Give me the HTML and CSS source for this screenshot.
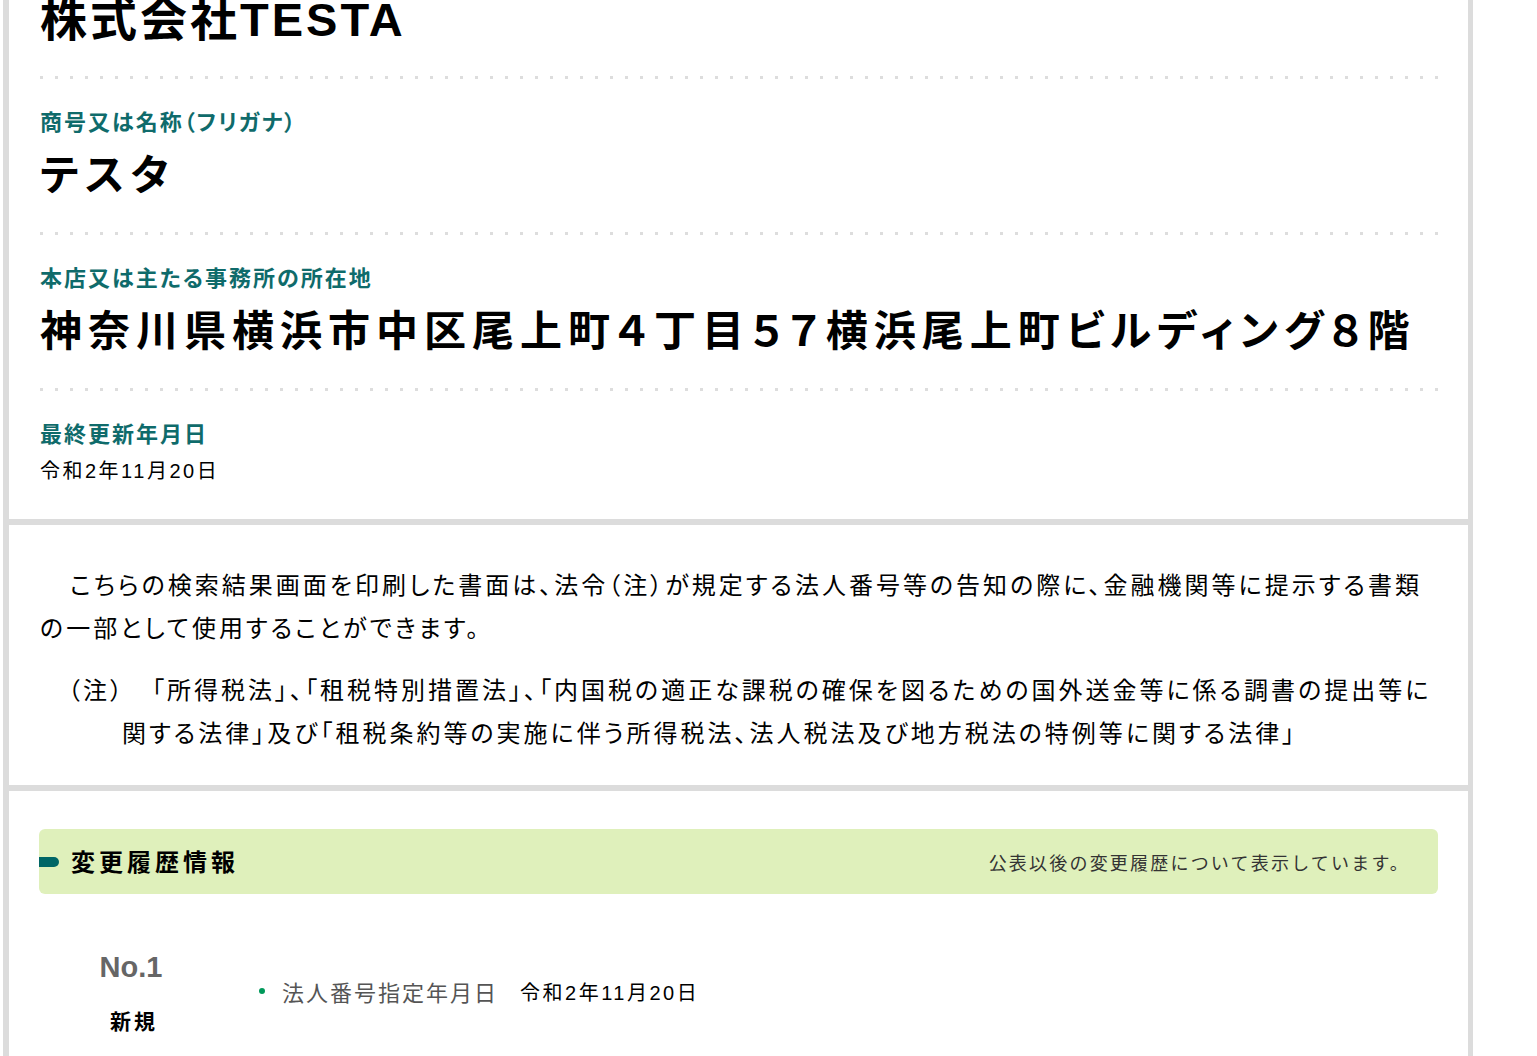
FILE: index.html
```html
<!doctype html>
<html lang="ja">
  <head>
    <meta charset="utf-8">
    <title>法人番号公表サイト</title>
    <link rel="stylesheet" href="styles.css">
  </head>
  <body>
    <div class="page">
      <section class="panel">
        <h1 class="corp-name">株式会社TESTA</h1>
        <div class="field">
          <div class="label">商号又は名称（フリガナ）</div>
          <div class="value">テスタ</div>
        </div>
        <div class="field">
          <div class="label">本店又は主たる事務所の所在地</div>
          <div class="value">神奈川県横浜市中区尾上町４丁目５７横浜尾上町ビルディング８階</div>
        </div>
        <div class="field last">
          <div class="label">最終更新年月日</div>
          <div class="date">令和2年11月20日</div>
        </div>
      </section>

      <section class="panel notice">
        <p class="lead">こちらの検索結果画面を印刷した書面は、法令（注）が規定する法人番号等の告知の際に、金融機関等に提示する書類の一部として使用することができます。</p>
        <p class="note">（注）　「所得税法」、「租税特別措置法」、「内国税の適正な課税の確保を図るための国外送金等に係る調書の提出等に関する法律」及び「租税条約等の実施に伴う所得税法、法人税法及び地方税法の特例等に関する法律」</p>
      </section>

      <section class="panel history">
        <div class="history-head">
          <span class="marker"></span>
          <h2>変更履歴情報</h2>
          <span class="head-note">公表以後の変更履歴について表示しています。</span>
        </div>
        <div class="entry">
          <div class="entry-no">
            <div class="no">No.1</div>
            <div class="kind">新規</div>
          </div>
          <ul class="entry-items">
            <li><span class="item-label">法人番号指定年月日</span><span class="item-date">令和2年11月20日</span></li>
          </ul>
        </div>
      </section>
    </div>
  </body>
</html>
```

FILE: styles.css
```css
body {
  margin: 0;
  background: #fff;
  color: #000;
  font-family: "Liberation Sans", "Noto Sans CJK JP", sans-serif;
}
.page {
  width: 1459px;
  margin: -50px 0 0 3px;
  padding: 0 5px 0 6px;
  background: #dcdcdc;
  display: flex;
  flex-direction: column;
  gap: 6px;
}
.panel {
  background: #fff;
  padding: 44px 30px 33px 31px;
}
.corp-name {
  margin: 0;
  font-size: 47px;
  line-height: 52px;
  letter-spacing: 3px;
  padding-bottom: 30px;
}
.field {
  padding: 32px 0 28px;
  background: linear-gradient(to right, #ddd 3px, transparent 3px) 0 0 / 15px 3px repeat-x;
}
.field.last {
  padding-bottom: 0;
}
.label {
  color: #0f6b6b;
  font-size: 22px;
  line-height: 30px;
  font-weight: bold;
  letter-spacing: 2px;
  font-feature-settings: "palt";
}
.value {
  margin-top: 10px;
  font-size: 42px;
  line-height: 56px;
  font-weight: bold;
  letter-spacing: 6px;
  font-feature-settings: "palt";
}
.date {
  margin-top: 6px;
  font-size: 20px;
  line-height: 30px;
  letter-spacing: 2.5px;
}
.notice {
  padding: 39px 30px 30px 31px;
  font-size: 24px;
  line-height: 43px;
  letter-spacing: 3px;
  font-feature-settings: "palt";
}
.notice p {
  margin: 0;
}
.lead {
  text-indent: 30px;
}
.notice .note {
  margin-top: 19px;
  padding-left: 82px;
  text-indent: -54px;
}
.history {
  padding: 38px 30px 40px 30px;
}
.history-head {
  display: flex;
  align-items: center;
  height: 65px;
  background: #dff0bb;
  border-radius: 6px;
}
.marker {
  width: 20px;
  height: 10px;
  background: #006666;
  border-radius: 0 5px 5px 0;
  margin-right: 12px;
}
.history-head h2 {
  margin: 0 0 3px;
  font-size: 24px;
  letter-spacing: 4px;
}
.head-note {
  margin-left: auto;
  padding-right: 28px;
  font-size: 18px;
  letter-spacing: 2.2px;
  color: #333;
}
.entry {
  display: flex;
  align-items: center;
  margin-top: 55px;
}
.entry-no {
  width: 184px;
  text-align: center;
}
.no {
  font-size: 29px;
  line-height: 36px;
  font-weight: bold;
  color: #666;
}
.kind {
  margin-top: 22px;
  padding-left: 6px;
  font-size: 21px;
  line-height: 30px;
  font-weight: bold;
  letter-spacing: 3px;
}
.entry-items {
  list-style: none;
  margin: 0 0 4px 36px;
  padding: 0;
}
.entry-items li {
  display: flex;
  align-items: center;
}
.entry-items li::before {
  content: "";
  width: 6px;
  height: 6px;
  border-radius: 50%;
  background: #00995a;
  margin-right: 17px;
}
.item-label {
  font-size: 22px;
  letter-spacing: 2px;
  color: #555;
}
.item-date {
  margin-left: 22px;
  font-size: 20px;
  letter-spacing: 2.5px;
}
```
